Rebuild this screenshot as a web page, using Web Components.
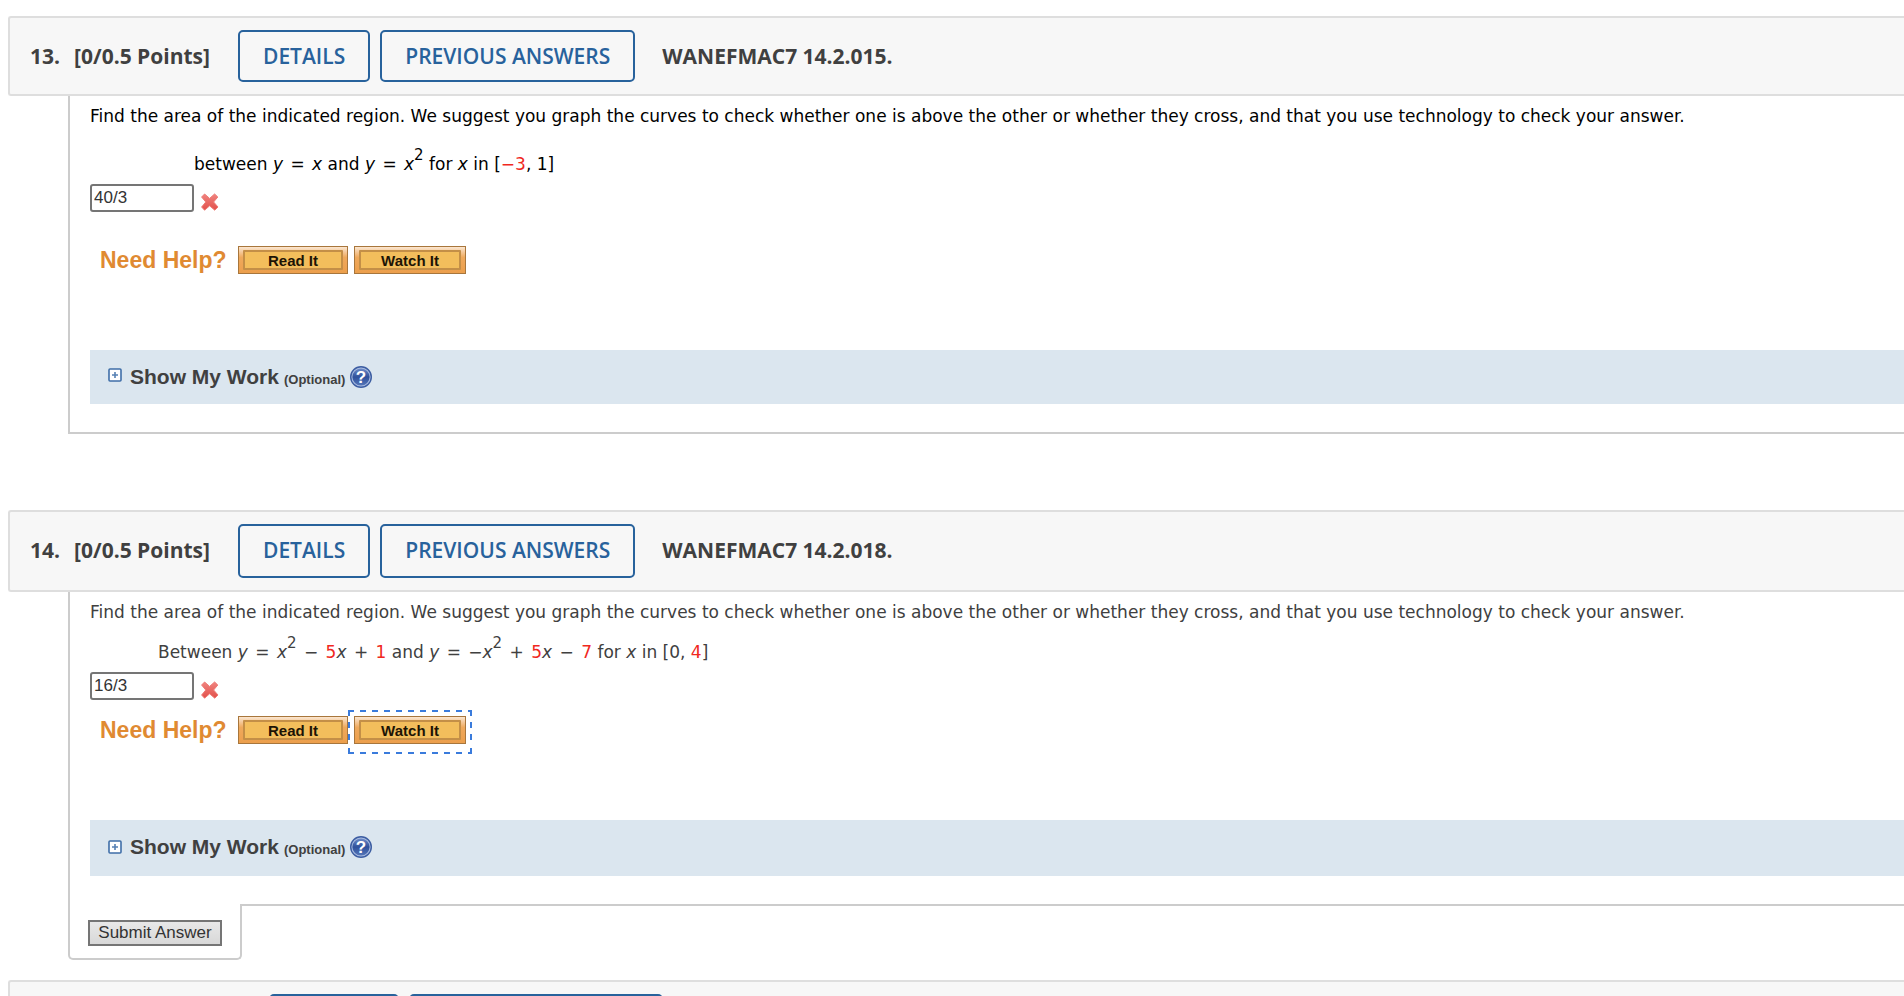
<!DOCTYPE html>
<html lang="en">
<head>
<meta charset="utf-8">
<title>Assignment</title>
<style>
html, body { margin: 0; height: 100%; overflow: hidden; background: #fff; }
body { font: 17px/24px "DejaVu Sans", Verdana, sans-serif; color: #404040; }
main { padding: 16px 0 0 8px; }
.first { --ink: #000; --help-gap: 34px; --line-gap: 24px; --indent: 104px; --after: 76px; }
.second { --slack: 2px; --help-gap: 16px; --line-gap: 16px; --indent: 68px; --after: 20px; }
.upcoming { --lead: 239px; }
i { font-style: italic; }
em { font-style: normal; color: #f0281e; }
sup { font-size: 15px; line-height: 0; vertical-align: 10px; }
.op { margin: 0 2px; }
</style>
</head>
<body>
<main>
  <wa-question class="first" number="13." points="[0/0.5 Points]" code="WANEFMAC7 14.2.015." answer="40/3">
    <span slot="prompt">Find the area of the indicated region. We suggest you graph the curves to check whether one is above the other or whether they cross, and that you use technology to check your answer.</span>
    <span slot="math">between <i>y</i> <span class="op">=</span> <i>x</i> and <i>y</i> <span class="op">=</span> <i>x</i><sup>2</sup> for <i>x</i> in [<em>−3</em>, 1]</span>
  </wa-question>
  <wa-question class="second" number="14." points="[0/0.5 Points]" code="WANEFMAC7 14.2.018." answer="16/3" submit focused>
    <span slot="prompt">Find the area of the indicated region. We suggest you graph the curves to check whether one is above the other or whether they cross, and that you use technology to check your answer.</span>
    <span slot="math">Between <i>y</i> <span class="op">=</span> <i>x</i><sup>2</sup> <span class="op">−</span> <em>5</em><i>x</i> <span class="op">+</span> <em>1</em> and <i>y</i> <span class="op">=</span> −<i>x</i><sup>2</sup> <span class="op">+</span> <em>5</em><i>x</i> <span class="op">−</span> <em>7</em> for <i>x</i> in [0, <em>4</em>]</span>
  </wa-question>
  <wa-header class="upcoming" unlabelled></wa-header>
</main>
<script>
function define(name, html, setup) {
  const template = document.createElement('template');
  template.innerHTML = html;
  customElements.define(name, class extends HTMLElement {
    connectedCallback() {
      if (this.shadowRoot) return;
      const root = this.attachShadow({ mode: 'open' });
      root.append(template.content.cloneNode(true));
      if (setup) setup(this, root);
    }
  });
}

define('wa-header', `
<style>
:host { display: flex; align-items: flex-start; box-sizing: border-box; padding: 12px 0 12px 20px;
  border: 2px solid #dedede; border-right: 0; border-radius: 3px 0 0 3px; background: #f7f7f7;
  font: 700 21px/48px "Open Sans", sans-serif; color: #404040; white-space: nowrap; }
.lead { box-sizing: border-box; width: var(--lead, 208px); display: flex; gap: 14px; padding-top: 2px; }
.code { padding: 2px 0 0 27px; }
button { box-sizing: border-box; min-width: 130px; min-height: 52px; margin-right: 10px; padding: 0 23px var(--slack, 0px);
  border: 2px solid #28629c; border-radius: 5px; background: transparent; color: #28629c; font: 600 21px/48px "Open Sans", sans-serif; }
button:last-of-type { min-width: 254px; margin-right: 0; }
</style>
<div class="lead"><span class="n"></span><span class="p"></span></div>
<button type="button">DETAILS</button><button type="button">PREVIOUS ANSWERS</button>
<div class="code"></div>`, (el, root) => {
  root.querySelector('.n').textContent = el.getAttribute('number') || '';
  root.querySelector('.p').textContent = el.getAttribute('points') || '';
  root.querySelector('.code').textContent = el.getAttribute('code') || '';
  if (el.hasAttribute('unlabelled')) {
    for (const button of root.querySelectorAll('button')) {
      button.setAttribute('aria-label', button.textContent);
      button.textContent = '';
    }
  }
});

define('wa-wrong-mark', `
<style>:host { display: block; width: 18px; height: 18px; } svg { display: block; }</style>
<svg width="18" height="18" viewBox="0 0 18 18" role="img" aria-label="Incorrect">
  <defs><linearGradient id="g" x2="0" y2="1"><stop stop-color="#f08480"/><stop offset="1" stop-color="#e2504a"/></linearGradient></defs>
  <path d="M3.6 1 8.6 5.4 13.6 1 16.8 4 12.6 9l4.4 5-3.2 3.2-5.2-4.4-5 4.4L.6 14 4.8 9 .6 4z" fill="url(#g)" stroke="#ee7a74" stroke-linejoin="round"/>
</svg>`);

define('wa-help-button', `
<style>
:host { display: block; position: relative; }
button { display: block; box-sizing: border-box; width: var(--width, 110px); height: 28px; padding: 3px 4px; border: 1px solid #a8763c;
  background: linear-gradient(#fbe6d0, #efa95c 40%, #ec9f4c); font: 700 15px/18px "Liberation Sans", Arial, sans-serif; color: #1c1405; white-space: nowrap; }
span { display: block; box-sizing: border-box; height: 20px; border: 2px solid #c48f47; border-radius: 1px; background: #f3be5c; line-height: 17px; }
svg { display: none; position: absolute; left: -6px; top: -6px; pointer-events: none; }
:host([focused]) svg { display: block; }
</style>
<button type="button"><span><slot></slot></span></button>
<svg width="124" height="44" viewBox="0 0 124 44" fill="none" stroke="#3a7bdc" stroke-width="2" stroke-dasharray="6 6" aria-hidden="true">
  <path d="M0 1H124M0 43H124M1 0V30M1 44V38M123 0V30M123 44V38"/>
</svg>`);

define('wa-show-work', `
<style>
:host { display: flex; align-items: flex-start; padding: 15px 0 calc(15px + var(--slack, 0px)) 18px; background: #dbe6ef; color: #404040;
  font: 700 21px/24px "Liberation Sans", Arial, sans-serif; }
.plus { margin: calc(3px + var(--slack, 0px)) 8px 0 0; padding: 0; border: 0; background: none; line-height: 0; }
small { font-size: 13px; line-height: 0; margin: 0 5px; }
.label { height: 24px; white-space: nowrap; }
a { margin-top: 1px; line-height: 0; }
svg text { font: 700 17px "Liberation Sans", Arial, sans-serif; }
</style>
<button class="plus" type="button" aria-label="Expand">
  <svg width="14" height="14" viewBox="0 0 14 14"><rect x="1" y="1" width="12" height="12" rx="1" fill="#fff" stroke="#3f6ea8" stroke-width="1.6"/><path d="M4 7h6M7 4v6" stroke="#5580b4" stroke-width="1.6"/></svg>
</button>
<div class="label">Show My Work<small>(Optional)</small></div>
<a href="#" aria-label="Help">
  <svg width="22" height="22" viewBox="0 0 22 22">
    <defs><linearGradient id="h" x2="0" y2="1"><stop stop-color="#6f8cc8"/><stop offset=".5" stop-color="#2f519c"/><stop offset="1" stop-color="#5576b8"/></linearGradient></defs>
    <circle cx="11" cy="11" r="10.3" fill="#a9bce0" stroke="#3c5da2" stroke-width="1.4"/>
    <circle cx="11" cy="11" r="8.6" fill="url(#h)"/>
    <text x="11" y="17" text-anchor="middle" fill="#fff">?</text>
  </svg>
</a>`);

define('wa-question', `
<style>
:host { display: block; margin-bottom: var(--after); color: var(--ink, #404040); }
.body { margin-left: 60px; padding: 8px 0 28px 20px; border-left: 2px solid #ccc; border-bottom: 2px solid #ccc; }
:host([submit]) .body { border-bottom: 0; }
p { margin: 0; }
.math { margin-top: var(--line-gap); padding-left: var(--indent); }
.answer { display: flex; margin-top: 8px; gap: 7px; align-items: flex-end; }
.answer wa-wrong-mark { margin-bottom: 1px; }
input { box-sizing: border-box; width: 104px; height: 28px; padding: 0 2px; border: 2px solid #757575; border-radius: 3px;
  background: #fff; color: #333; font: 17px/24px "Liberation Sans", Arial, sans-serif; }
.help { display: flex; align-items: center; margin: var(--help-gap) 0 76px; padding-left: 10px; }
.help b { width: 138px; color: #e08a32; font: 700 23px/28px "Liberation Sans", Arial, sans-serif; }
.help .watch { --width: 112px; margin-left: 6px; }
.foot { display: none; }
:host([submit]) .foot { display: flex; }
.tab { box-sizing: border-box; margin-left: 60px; padding: 16px 18px 12px; border: 2px solid #ccc; border-top: 0; border-radius: 0 0 5px 5px; }
.foot::after { content: ""; flex: 1; border-top: 2px solid #ccc; }
.tab button { display: block; box-sizing: border-box; height: 26px; padding: 0 8px; border: 2px solid #757575; background: linear-gradient(#e8e8e8, #d8d8d8);
  color: #333; min-width: 134px; font: 17px/20px "Liberation Sans", Arial, sans-serif; white-space: nowrap; }
</style>
<div class="head"></div>
<div class="body">
  <p><slot name="prompt"></slot></p>
  <p class="math"><slot name="math"></slot></p>
  <div class="answer"><input type="text" aria-label="Answer"><wa-wrong-mark></wa-wrong-mark></div>
  <div class="help"><b>Need Help?</b><wa-help-button>Read It</wa-help-button><wa-help-button class="watch">Watch It</wa-help-button></div>
  <wa-show-work></wa-show-work>
</div>
<div class="foot"><div class="tab"><button type="button">Submit Answer</button></div></div>`, (el, root) => {
  const header = document.createElement('wa-header');
  for (const key of ['number', 'points', 'code']) header.setAttribute(key, el.getAttribute(key));
  root.querySelector('.head').append(header);
  root.querySelector('input').value = el.getAttribute('answer');
  if (el.hasAttribute('focused')) root.querySelector('.watch').setAttribute('focused', '');
});
</script>
</body>
</html>
